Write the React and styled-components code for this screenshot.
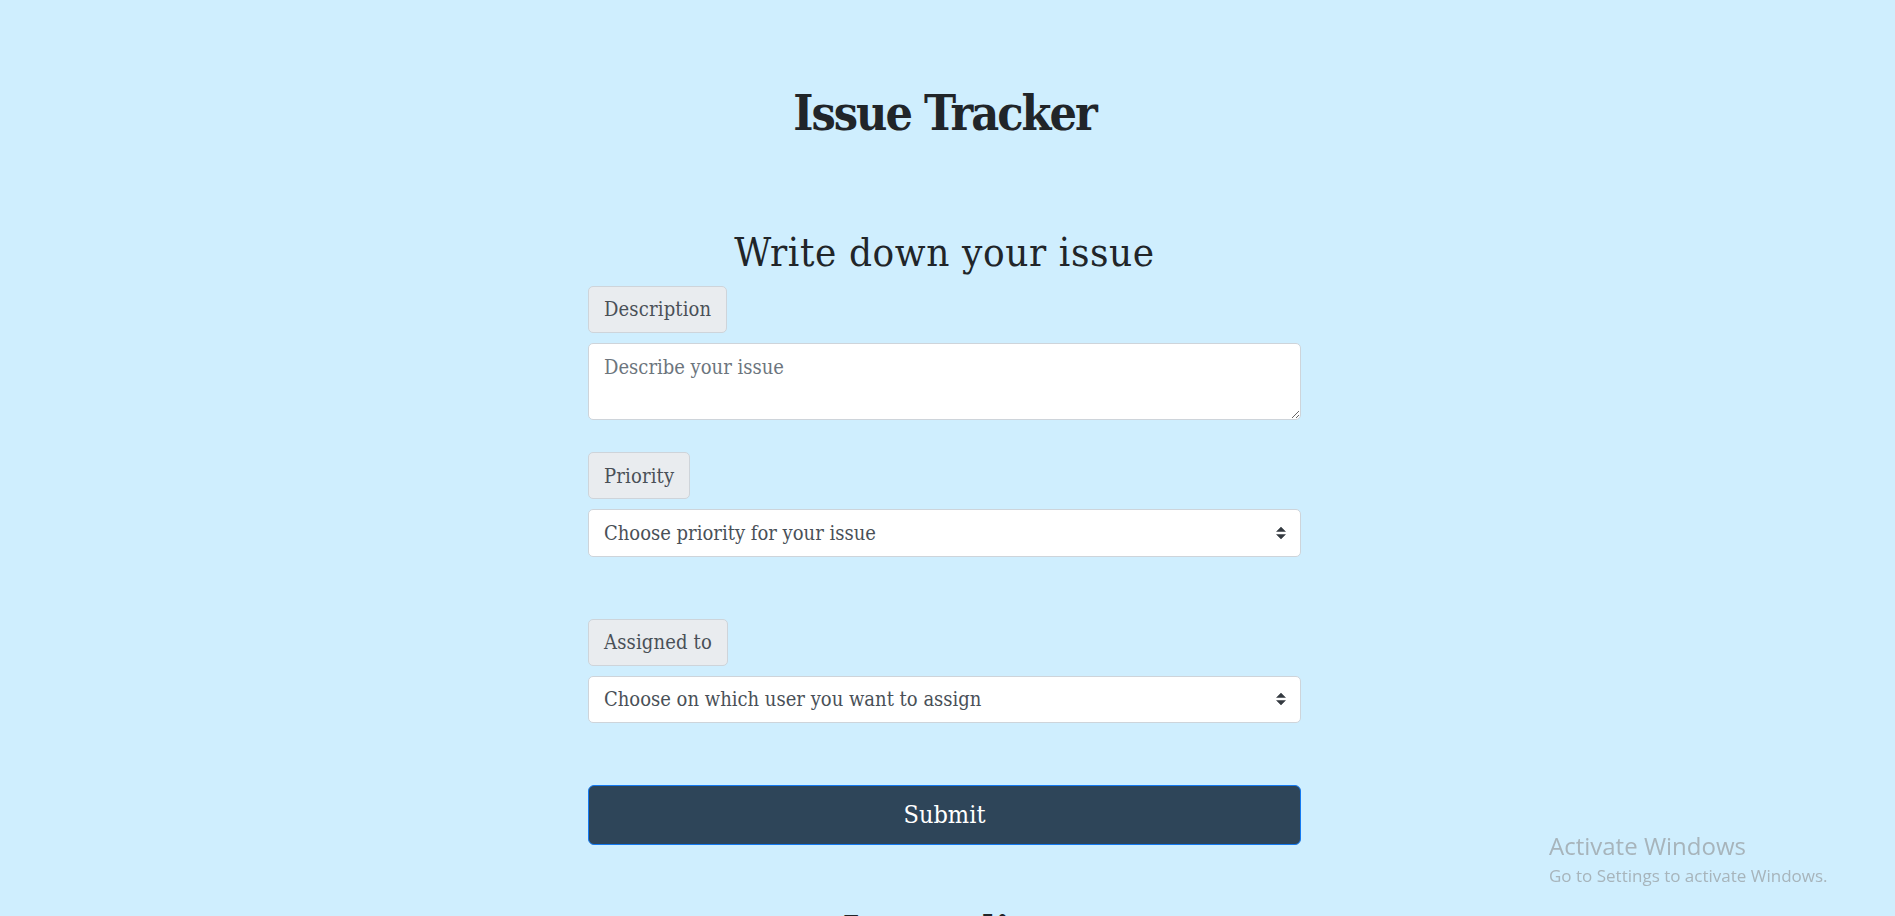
import React from "react";
import styled, { createGlobalStyle } from "styled-components";

const Global = createGlobalStyle`
  html, body { margin: 0; padding: 0; background: #cfeefe; }
  body { font-family: "DejaVu Serif Condensed", "DejaVu Serif", serif; font-stretch: condensed; color: #212529; overflow: hidden; }
  * { box-sizing: border-box; }
`;

const Page = styled.div`
  min-height: 916px;
  padding: 85px 6px 0 0;
  display: flex;
  flex-direction: column;
  align-items: center;
`;

const Title = styled.h1`
  margin: 0 0 85px;
  font-size: 48px;
  font-weight: 700;
  line-height: 1.2;
  letter-spacing: -2px;
`;

const Subtitle = styled.h2`
  margin: 0 0 10px;
  font-size: 40px;
  font-weight: 400;
  line-height: 1.2;
  letter-spacing: 0.6px;
`;

const Form = styled.form`
  width: 713px;
  display: flex;
  flex-direction: column;
`;

const Field = styled.div`
  display: flex;
  flex-direction: column;
  align-items: flex-start;
  gap: ${(p) => p.$gap}px;
  margin-bottom: ${(p) => p.$after}px;
`;

const Label = styled.label`
  display: inline-flex;
  align-items: center;
  padding: 7.5px 15px;
  font-size: 20px;
  line-height: 1.5;
  letter-spacing: 0.15px;
  color: #495057;
  background: #e9ecef;
  border: 1px solid #ced4da;
  border-radius: 5px;
`;

const TextArea = styled.textarea`
  width: 100%;
  height: 77px;
  padding: 7.5px 15px;
  font-family: inherit;
  font-stretch: inherit;
  font-size: 20px;
  line-height: 1.5;
  color: #495057;
  background: #fff;
  border: 1px solid #ced4da;
  border-radius: 5px;
  resize: vertical;
  outline: none;
  &::placeholder { color: #6c757d; }
`;

const SelectWrap = styled.div`
  position: relative;
  width: 100%;
`;

const Select = styled.select`
  width: 100%;
  height: 47.5px;
  padding: 7.5px 40px 7.5px 15px;
  font-family: inherit;
  font-stretch: inherit;
  font-size: 20px;
  line-height: 1.5;
  color: #495057;
  background: #fff;
  border: 1px solid #ced4da;
  border-radius: 5px;
  appearance: none;
  outline: none;
`;

const Arrows = styled.svg`
  position: absolute;
  right: 15px;
  top: 50%;
  transform: translateY(-50%);
  pointer-events: none;
`;

const Submit = styled.button`
  width: 100%;
  height: 59.5px;
  padding: 10px 20px;
  font-family: inherit;
  font-stretch: inherit;
  font-size: 25px;
  line-height: 1.5;
  color: #fff;
  background: #2e4559;
  border: 1.5px solid #1479f0;
  border-radius: 6px;
  cursor: pointer;
`;

const Bottom = styled.h2`
  margin: 61px 0 0;
  font-size: 40px;
  font-weight: 700;
  line-height: 1.2;
`;

const Watermark = styled.div`
  position: fixed;
  left: 1549px;
  top: 830px;
  font-family: "Open Sans", "Noto Sans", sans-serif;
  font-stretch: normal;
  color: #a7b4bb;
  pointer-events: none;
`;

const WmTitle = styled.div`
  font-size: 24px;
  line-height: 32px;
`;

const WmText = styled.div`
  margin-top: 2px;
  font-size: 17px;
  line-height: 23px;
`;

function SelectField({ label, placeholder, after }) {
  return (
    <Field $gap={10} $after={after}>
      <Label>{label}</Label>
      <SelectWrap>
        <Select defaultValue="">
          <option value="" disabled>
            {placeholder}
          </option>
        </Select>
        <Arrows width="10" height="13" viewBox="0 0 4 5">
          <path d="M2 0L0 2h4zm0 5L0 3h4z" fill="#343a40" />
        </Arrows>
      </SelectWrap>
    </Field>
  );
}

export default function App() {
  return (
    <>
      <Global />
      <Page>
        <Title>Issue Tracker</Title>
        <Subtitle>Write down your issue</Subtitle>
        <Form onSubmit={(e) => e.preventDefault()}>
          <Field $gap={10.5} $after={32}>
            <Label>Description</Label>
            <TextArea placeholder="Describe your issue" />
          </Field>
          <SelectField label="Priority" placeholder="Choose priority for your issue" after={62} />
          <SelectField label="Assigned to" placeholder="Choose on which user you want to assign" after={62} />
          <Submit type="submit">Submit</Submit>
        </Form>
        <Bottom>Issues list</Bottom>
      </Page>
      <Watermark>
        <WmTitle>Activate Windows</WmTitle>
        <WmText>Go to Settings to activate Windows.</WmText>
      </Watermark>
    </>
  );
}
